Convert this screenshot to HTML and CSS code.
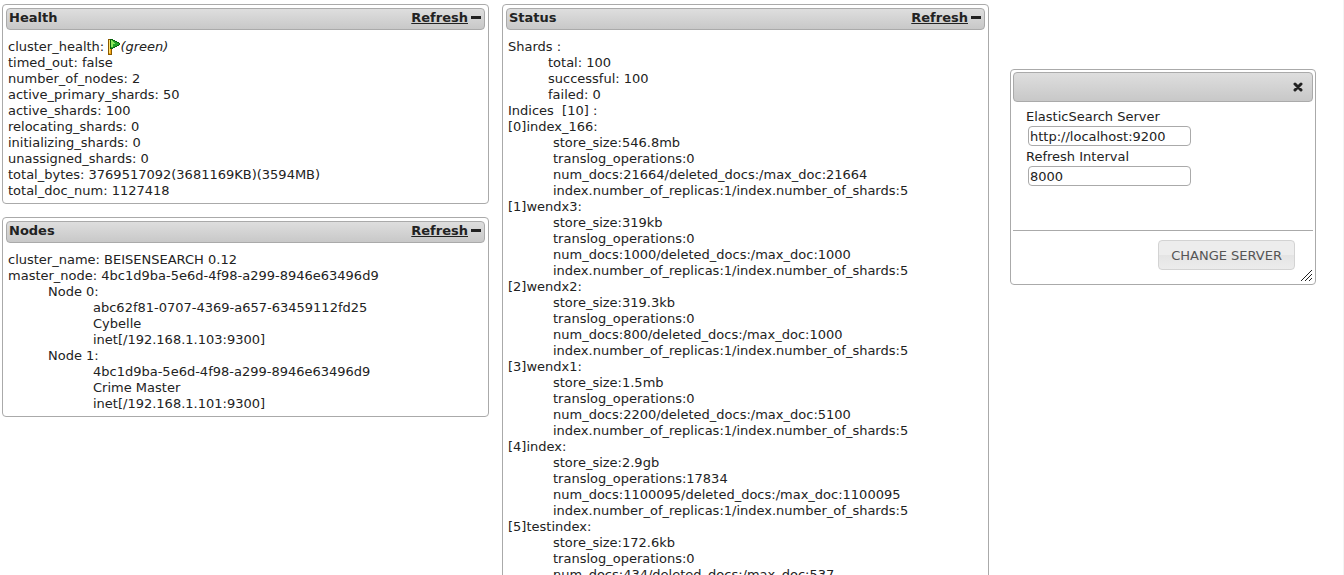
FILE: index.html
```html
<!DOCTYPE html>
<html lang="en">
<head>
<meta charset="utf-8">
<title>Cluster overview</title>
<link rel="stylesheet" href="styles.css">
</head>
<body>
<main class="page">
  <div class="column">
    <section class="panel">
      <header class="panel-header">
        <h2>Health</h2>
        <a class="refresh" href="#health">Refresh</a>
        <button class="toggle" type="button" aria-label="Collapse Health"></button>
      </header>
      <div class="content" id="health">
        <div>cluster_health: <svg class="flag" viewBox="0 0 12 16" shape-rendering="crispEdges" aria-hidden="true"><path fill="#8a5a00" d="M0 0h4v16H0z"/><path fill="#f5a81c" d="M1 1h2v14H1z"/><path fill="#ffe070" d="M1 1h1v13H1z"/><path fill="#08620c" d="M2 0h3v1h2v1h2v1h2v1h1v2h-1v1H9v1H7v1H5v1H2z"/><path fill="#22a52a" d="M3 1h2v1h2v1h2v1h2v2H9v1H7v1H5v1H3z"/><path fill="#8be85c" d="M3 1h1v1h1v1h1v1h1v1H5v3H3z"/></svg><em>(green)</em></div>
        <div>timed_out: false</div>
        <div>number_of_nodes: 2</div>
        <div>active_primary_shards: 50</div>
        <div>active_shards: 100</div>
        <div>relocating_shards: 0</div>
        <div>initializing_shards: 0</div>
        <div>unassigned_shards: 0</div>
        <div>total_bytes: 3769517092(3681169KB)(3594MB)</div>
        <div>total_doc_num: 1127418</div>
      </div>
    </section>
    <section class="panel">
      <header class="panel-header">
        <h2>Nodes</h2>
        <a class="refresh" href="#nodes">Refresh</a>
        <button class="toggle" type="button" aria-label="Collapse Nodes"></button>
      </header>
      <div class="content" id="nodes">
        <div>cluster_name: BEISENSEARCH 0.12</div>
        <div>master_node: 4bc1d9ba-5e6d-4f98-a299-8946e63496d9</div>
        <div class="group">
          <div>Node 0:</div>
          <div class="detail">
            <div>abc62f81-0707-4369-a657-63459112fd25</div>
            <div>Cybelle</div>
            <div>inet[/192.168.1.103:9300]</div>
          </div>
          <div>Node 1:</div>
          <div class="detail">
            <div>4bc1d9ba-5e6d-4f98-a299-8946e63496d9</div>
            <div>Crime Master</div>
            <div>inet[/192.168.1.101:9300]</div>
          </div>
        </div>
      </div>
    </section>
  </div>

  <div class="column">
    <section class="panel">
      <header class="panel-header">
        <h2>Status</h2>
        <a class="refresh" href="#status">Refresh</a>
        <button class="toggle" type="button" aria-label="Collapse Status"></button>
      </header>
      <div class="content" id="status">
        <div>Shards :</div>
        <div class="group">
          <div>total: 100</div>
          <div>successful: 100</div>
          <div>failed: 0</div>
        </div>
        <div>Indices &nbsp;[10] :</div>
        <div>[0]index_166:</div>
        <div class="detail">
          <div>store_size:546.8mb</div>
          <div>translog_operations:0</div>
          <div>num_docs:21664/deleted_docs:/max_doc:21664</div>
          <div>index.number_of_replicas:1/index.number_of_shards:5</div>
        </div>
        <div>[1]wendx3:</div>
        <div class="detail">
          <div>store_size:319kb</div>
          <div>translog_operations:0</div>
          <div>num_docs:1000/deleted_docs:/max_doc:1000</div>
          <div>index.number_of_replicas:1/index.number_of_shards:5</div>
        </div>
        <div>[2]wendx2:</div>
        <div class="detail">
          <div>store_size:319.3kb</div>
          <div>translog_operations:0</div>
          <div>num_docs:800/deleted_docs:/max_doc:1000</div>
          <div>index.number_of_replicas:1/index.number_of_shards:5</div>
        </div>
        <div>[3]wendx1:</div>
        <div class="detail">
          <div>store_size:1.5mb</div>
          <div>translog_operations:0</div>
          <div>num_docs:2200/deleted_docs:/max_doc:5100</div>
          <div>index.number_of_replicas:1/index.number_of_shards:5</div>
        </div>
        <div>[4]index:</div>
        <div class="detail">
          <div>store_size:2.9gb</div>
          <div>translog_operations:17834</div>
          <div>num_docs:1100095/deleted_docs:/max_doc:1100095</div>
          <div>index.number_of_replicas:1/index.number_of_shards:5</div>
        </div>
        <div>[5]testindex:</div>
        <div class="detail">
          <div>store_size:172.6kb</div>
          <div>translog_operations:0</div>
          <div>num_docs:434/deleted_docs:/max_doc:537</div>
          <div>index.number_of_replicas:1/index.number_of_shards:5</div>
        </div>
      </div>
    </section>
  </div>

  <form class="dialog" role="dialog" aria-label="Server settings">
    <div class="dialog-header">
      <button class="close" type="button" aria-label="Close"><svg viewBox="0 0 10 10" aria-hidden="true"><path d="M2 2l6 6M8 2l-6 6" stroke="#222" stroke-width="3" stroke-linecap="round"/></svg></button>
    </div>
    <div class="fields">
      <label for="server">ElasticSearch Server</label>
      <input id="server" type="text" value="http://localhost:9200">
      <label for="interval">Refresh Interval</label>
      <input id="interval" type="text" value="8000">
    </div>
    <div class="actions">
      <button class="submit" type="button">CHANGE SERVER</button>
    </div>
    <svg class="grip" viewBox="0 0 12 12" aria-hidden="true"><path d="M0 11L11 0M4 11L11 4M8 11L11 8" fill="none" stroke="#222" stroke-width="1"/></svg>
  </form>
</main>
</body>
</html>
```
FILE: styles.css
```css
* {
  box-sizing: border-box;
}

body {
  margin: 0;
  background: #fff;
  color: #222;
  font: 13px/16px Verdana, "DejaVu Sans", sans-serif;
}

.page {
  display: grid;
  grid-template-columns: minmax(0, 487fr) minmax(0, 487fr) minmax(0, 314fr);
  gap: 13px;
  align-items: start;
  height: 100vh;
  overflow: hidden;
  padding: 4px 27px 0 2px;
  border-right: 1px solid #f4f4f4;
}

.column {
  display: grid;
  gap: 13px;
}

.panel,
.dialog {
  border: 1px solid #aaa;
  border-radius: 4px;
  background: #fff;
}

.panel {
  padding: 3px;
}

.panel-header,
.dialog-header {
  display: flex;
  border: 1px solid #aaa;
  border-radius: 4px;
  background: linear-gradient(#dedede, #c8c8c8);
}

.panel-header {
  align-items: flex-start;
  height: 22px;
  padding: 1px 3px 0 2px;
  font-weight: bold;
}

.panel-header h2 {
  flex: 1;
  margin: 0;
  font-size: 13px;
}

.refresh {
  color: #222;
}

.toggle {
  width: 10px;
  height: 3px;
  margin: 6px 0 0 3px;
  padding: 0;
  border: 0;
  background: #222;
}

.content {
  padding: 9px 2px 1px;
}

.group {
  padding-left: 40px;
}

.detail {
  padding-left: 45px;
}

.flag {
  width: 12px;
  height: 16px;
  vertical-align: top;
}

.dialog {
  position: relative;
  margin: 65px 0 0 8px;
  padding: 2px;
}

.dialog-header {
  align-items: center;
  justify-content: flex-end;
  height: 30px;
  padding-right: 9px;
}

.close {
  width: 10px;
  height: 10px;
  padding: 0;
  border: 0;
  background: none;
}

.close svg {
  display: block;
}

.fields {
  display: flex;
  flex-direction: column;
  align-items: flex-start;
  min-height: 128px;
  padding: 7px 13px;
}

.fields input {
  width: 163px;
  max-width: 100%;
  height: 20px;
  margin: 1px 2px 3px;
  padding: 0 1px;
  border: 1px solid #aaa;
  border-radius: 4px;
  background: #fff;
  color: #222;
  font: inherit;
}

.actions {
  display: flex;
  justify-content: flex-end;
  padding: 9px 18px 12px;
  border-top: 1px solid #aaa;
}

.submit {
  height: 30px;
  padding: 1px 12px 0;
  border: 1px solid #d3d3d3;
  border-radius: 4px;
  background: linear-gradient(#ededed 50%, #e4e4e4 50%, #ececec);
  color: #555;
  font: inherit;
}

.grip {
  position: absolute;
  right: 2px;
  bottom: 2px;
  width: 12px;
  height: 12px;
}
```
